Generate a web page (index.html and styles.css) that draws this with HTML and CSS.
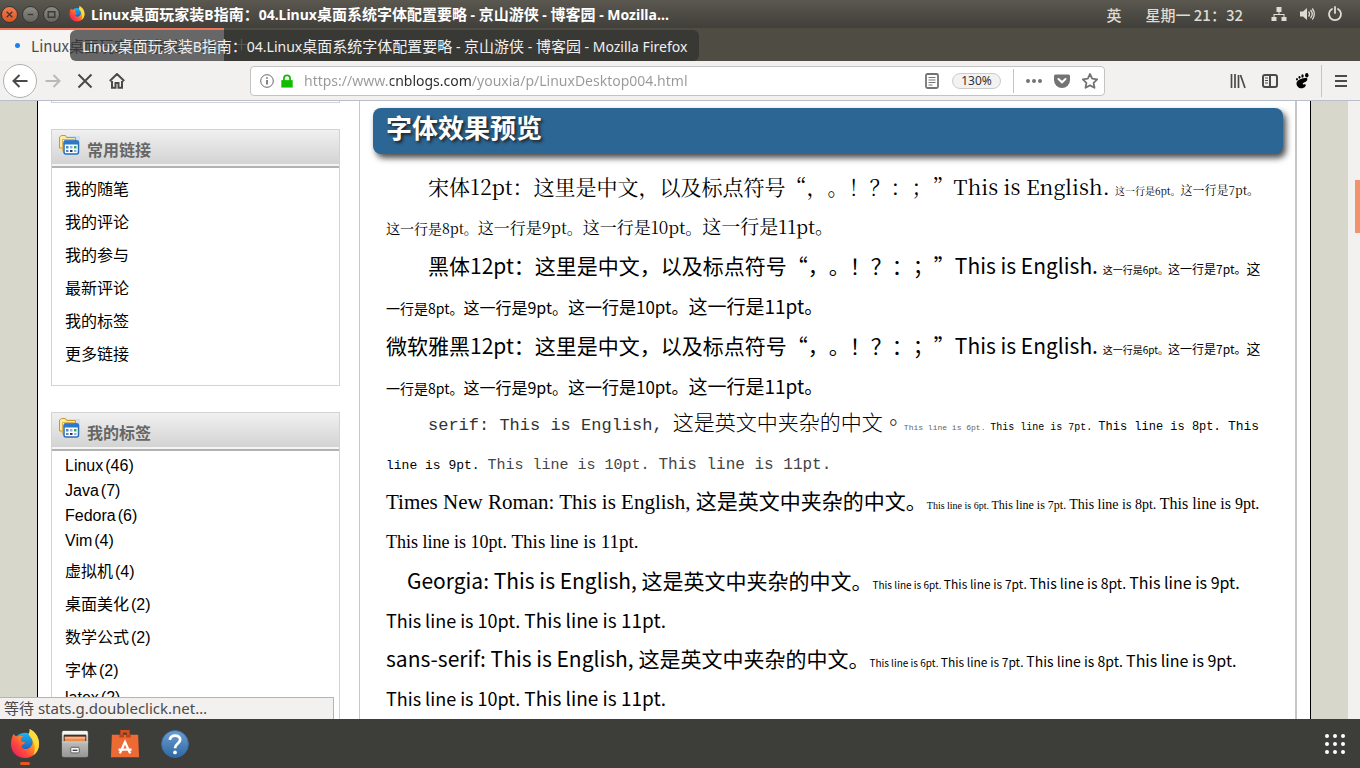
FILE: index.html
```html
<!DOCTYPE html>
<html lang="zh-CN">
<head>
<meta charset="utf-8">
<title>Linux桌面玩家装B指南：04.Linux桌面系统字体配置要略 - 京山游侠 - 博客园</title>
<link rel="stylesheet" href="styles.css">
</head>
<body>
<svg class="defs" width="0" height="0" aria-hidden="true">
  <defs>
    <linearGradient id="fox" x1="1" y1="0" x2="0" y2="1"><stop offset="0" stop-color="#fff44f"/><stop offset=".35" stop-color="#ffa41c"/><stop offset=".65" stop-color="#ff4a3c"/><stop offset="1" stop-color="#e3106e"/></linearGradient>
    <linearGradient id="globe" x1="0" y1="0" x2="0" y2="1"><stop offset="0" stop-color="#1ab5f5"/><stop offset="1" stop-color="#2a3a9c"/></linearGradient>
    <linearGradient id="drawer" x1="0" y1="0" x2="0" y2="1"><stop offset="0" stop-color="#d8d8d6"/><stop offset="1" stop-color="#969694"/></linearGradient>
    <linearGradient id="help" x1="0" y1="0" x2="0" y2="1"><stop offset="0" stop-color="#6d9fd0"/><stop offset="1" stop-color="#2f68a5"/></linearGradient>
  </defs>
  <symbol id="firefox" viewBox="0 0 32 32">
    <circle cx="16" cy="17" r="13" fill="url(#globe)"/>
    <path fill="url(#fox)" d="M4 5c1 2 2 2.500 4 3 2-1 4-1 6 0-2 1-3 3-2 5 1 1 3 1 4 1 0 2-3 2-4 4 1 4 6 4 9 2 4-3 4-8 1-12-1-1-2-2-2-3 1-1 1-3 1-5 6 3 10 9 10 16 0 9-7 15-15 15S1 25 1 16C1 12 2 8 4 5z"/>
    <path fill="#ffe23c" d="M21 0c6 3 10 9 10 16 0 5-2 9-6 12 2-5 2-11-1-16-1-3-4-4-4-7 1-1 1-3 1-5z" opacity=".8"/>
  </symbol>
  <symbol id="links" viewBox="0 0 22 22">
    <path fill="#cfe0f4" d="M3 2h19v19H3z"/>
    <path fill="#fbe9a8" stroke="#c9982c" d="M1.500 14V3l2-1.500h4l1 2h9V14z"/>
    <path fill="#fff6d0" stroke="#d8b254" d="M4.500 17V5.500h12V17z"/>
    <rect x="6" y="7" width="14.500" height="13" rx="2" fill="#fff" stroke="#2b6cb8" stroke-width="1.500"/>
    <path fill="#2b78cc" d="M6 6.500h14.500v4H6z"/>
    <path fill="#4d86c6" d="M8 12h2.500v2.500H8zM8 16h2.500v2H8z"/><path fill="#2fae4a" d="M16 12h2.500v2.500H16z"/><path fill="#8fb3da" d="M12 12h2.500v2.500H12zM16 16h2.500v2H16z"/><path fill="#1d3c6b" d="M12 16h2.500v2H12z"/>
  </symbol>
</svg>

<header class="topbar">
  <div class="winbtns">
    <button class="win close" aria-label="关闭"><svg viewBox="0 0 16 16"><path d="M5 5l6 6M11 5l-6 6"/></svg></button>
    <button class="win" aria-label="最小化"><svg viewBox="0 0 16 16"><path d="M5 8h6"/></svg></button>
    <button class="win" aria-label="最大化"><svg viewBox="0 0 16 16"><path d="M4.500 5h7v6h-7z"/></svg></button>
  </div>
  <svg class="appicon"><use href="#firefox"/></svg>
  <h1 class="wintitle"><span class="la">Linux</span>桌面玩家装<span class="la">B</span>指南：<span class="la">04.Linux</span>桌面系统字体配置要略<span class="la"> - </span>京山游侠<span class="la"> - </span>博客园<span class="la"> - Mozilla…</span></h1>
  <div class="tray">
    <span>英</span>
    <time>星期一 21：32</time>
    <svg class="trayicon" viewBox="0 0 16 16"><path fill="currentColor" d="M5.500 1h5v5h-2v2h5v3h2v4h-5v-4h2V9h-9v2h2v4h-5v-4h2V8h5V6h-2z"/></svg>
    <svg class="trayicon" viewBox="0 0 16 16"><path fill="currentColor" d="M1 5.500h3L8 2v12l-4-3.500H1z"/><path fill="none" stroke="currentColor" stroke-width="1.300" d="M9.500 5.500q2 2.500 0 5M11.500 4q3.500 4 0 8M13.300 2.500q4 5.500 0 11"/></svg>
    <svg class="trayicon" viewBox="0 0 16 16"><path fill="none" stroke="currentColor" stroke-width="1.800" stroke-linecap="round" d="M5 3a6 6 0 1 0 6 0M8 1v6"/></svg>
  </div>
</header>

<div class="tabstrip">
  <div class="tab"><span class="dot"></span><span class="tabtext">Linux桌面玩家装B指南：04.</span></div>
  <button class="newtab" aria-label="新标签页"><svg viewBox="0 0 16 16"><path d="M8 1v14M1 8h14"/></svg></button>
  <div class="tooltip"><span class="la">Linux</span>桌面玩家装<span class="la">B</span>指南：<span class="la">04.Linux</span>桌面系统字体配置要略<span class="la"> - </span>京山游侠<span class="la"> - </span>博客园<span class="la"> - Mozilla Firefox</span></div>
</div>

<nav class="navbar">
  <div class="navleft">
    <button class="back" aria-label="后退"><svg viewBox="0 0 16 16"><path d="M15.500 8H1.500M7.500 2l-6 6 6 6"/></svg></button>
    <button class="nb dim" aria-label="前进"><svg viewBox="0 0 16 16"><path d="M.5 8h14M8.500 2l6 6-6 6"/></svg></button>
    <button class="nb" aria-label="停止"><svg viewBox="0 0 16 16"><path d="M1.500 1.500l13 13M14.500 1.500l-13 13"/></svg></button>
    <button class="nb" aria-label="主页"><svg viewBox="0 0 16 16"><path d="M.8 8L8 1l7.200 7M3 8v6.800h3.500V10h3v4.800H13V8"/></svg></button>
  </div>
  <div class="urlbar">
    <svg class="ico info" viewBox="0 0 14 14"><circle cx="7" cy="7" r="6.300"/><path stroke-width="1.600" d="M7 6v4.500M7 3.200v1.600"/></svg>
    <svg class="ico" viewBox="0 0 16 16"><path fill="#12bc00" d="M1.500 7h13v8.500h-13z"/><path fill="none" stroke="#12bc00" stroke-width="2" d="M4.500 8V5a3.500 3.500 0 0 1 7 0v3"/></svg>
    <input class="url" type="text" aria-label="地址" value="https://www.cnblogs.com/youxia/p/LinuxDesktop004.html">
    <button class="ub" aria-label="阅读模式"><svg viewBox="0 0 16 16"><rect x="2" y="1" width="12" height="14" rx="1.500"/><path stroke-width="1" d="M4.500 4.500h7M4.500 7h7M4.500 9.500h7M4.500 12h4"/></svg></button>
    <button class="zoom">130%</button>
    <span class="sep"></span>
    <button class="ub" aria-label="页面操作"><svg viewBox="0 0 16 16"><path fill="#737373" stroke="none" d="M0 8a2 2 0 1 0 4 0 2 2 0 1 0-4 0M6 8a2 2 0 1 0 4 0 2 2 0 1 0-4 0M12 8a2 2 0 1 0 4 0 2 2 0 1 0-4 0"/></svg></button>
    <button class="ub" aria-label="Pocket"><svg viewBox="0 0 16 16"><path fill="#737373" stroke="none" d="M1.500 1.500h13q1.500 0 1.500 1.500v4a8 8 0 0 1-16 0V3q0-1.500 1.500-1.500z"/><path stroke="#fff" stroke-width="2" stroke-linecap="round" d="M4.500 6L8 9.300 11.500 6"/></svg></button>
    <button class="ub" aria-label="收藏"><svg viewBox="0 0 16 16"><path stroke-linejoin="round" d="M8 1l2.200 4.600 5 .7-3.600 3.500.9 5L8 12.400l-4.500 2.400.9-5L.8 6.300l5-.7z"/></svg></button>
  </div>
  <div class="navright">
    <button class="nb" aria-label="书架"><svg viewBox="0 0 16 16"><path stroke-width="1.700" d="M1.500 1v14M5 1v14M8.500 2v13M10.500 2l4.500 13"/></svg></button>
    <button class="nb" aria-label="侧栏"><svg viewBox="0 0 16 16"><rect x="1" y="2" width="14" height="12" rx="2"/><path d="M8 2v12"/><path stroke-width="1" d="M3 5h3M3 7.500h3M3 10h3"/></svg></button>
    <button class="nb foot" aria-label="GNOME"><svg viewBox="0 0 16 16"><path fill="#000" stroke="none" d="M11 5c3-.5 3 2 1 3.500-2 1.300-4 1.500-3 2.700.8.800 1.500-.5 2.500.3 1 1.200-1 3.800-4 3.800S2.500 13 2.500 10.500 6 5.500 11 5z"/><ellipse cx="12.800" cy="2.300" rx="1.700" ry="2.200" fill="#000" stroke="none"/><ellipse cx="8.500" cy="3" rx="1.200" ry="1.700" fill="#000" stroke="none"/><ellipse cx="5.500" cy="4.300" rx="1" ry="1.400" fill="#000" stroke="none"/><ellipse cx="3" cy="6.200" rx=".9" ry="1.200" fill="#000" stroke="none"/></svg></button>
    <span class="sep"></span>
    <button class="nb" aria-label="菜单"><svg viewBox="0 0 16 16"><path d="M2 3h12M2 8h12M2 13h12"/></svg></button>
  </div>
</nav>

<div class="viewport">
  <div class="page">
    <aside class="side">
      <div class="box prev"></div>
      <section class="box common">
        <h3 class="boxhead"><svg><use href="#links"/></svg>常用链接</h3>
        <ul>
          <li><a href="#">我的随笔</a></li>
          <li><a href="#">我的评论</a></li>
          <li><a href="#">我的参与</a></li>
          <li><a href="#">最新评论</a></li>
          <li><a href="#">我的标签</a></li>
          <li><a href="#">更多链接</a></li>
        </ul>
      </section>
      <section class="box tags">
        <h3 class="boxhead"><svg><use href="#links"/></svg>我的标签</h3>
        <ul>
          <li class="en"><a href="#">Linux</a>(46)</li>
          <li class="en"><a href="#">Java</a>(7)</li>
          <li class="en"><a href="#">Fedora</a>(6)</li>
          <li class="en"><a href="#">Vim</a>(4)</li>
          <li><a href="#">虚拟机</a>(4)</li>
          <li><a href="#">桌面美化</a>(2)</li>
          <li><a href="#">数学公式</a>(2)</li>
          <li><a href="#">字体</a>(2)</li>
          <li class="en"><a href="#">latex</a>(2)</li>
        </ul>
      </section>
    </aside>
    <main class="post">
      <h2>字体效果预览</h2>
      <p class="song in2">宋体12pt：这里是中文，以及标点符号“，。！？：；”This is English. <span class="s6">这一行是6pt。</span><span class="s7">这一行是7pt。</span><span class="s8">这一行是8pt。</span><span class="s9">这一行是9pt。</span><span class="s10">这一行是10pt。</span><span class="s11">这一行是11pt。</span></p>
      <p class="in2">黑体12pt：这里是中文，以及标点符号“，。！？：；”This is English. <span class="s6">这一行是6pt。</span><span class="s7">这一行是7pt。</span><span class="s8">这一行是8pt。</span><span class="s9">这一行是9pt。</span><span class="s10">这一行是10pt。</span><span class="s11">这一行是11pt。</span></p>
      <p>微软雅黑12pt：这里是中文，以及标点符号“，。！？：；”This is English. <span class="s6">这一行是6pt。</span><span class="s7">这一行是7pt。</span><span class="s8">这一行是8pt。</span><span class="s9">这一行是9pt。</span><span class="s10">这一行是10pt。</span><span class="s11">这一行是11pt。</span></p>
      <p class="serif in2"><span class="m12">serif: This is English, </span><span lang="zh-TW" class="tw">这是英文中夹杂的中文。</span><span class="m6">This line is 6pt. </span><span class="m7">This line is 7pt. </span><span class="m8">This line is 8pt. </span><span class="m9">This line is 9pt. </span><span class="m10">This line is 10pt. </span><span class="m11">This line is 11pt.</span></p>
      <p class="latin times">Times New Roman: This is English, 这是英文中夹杂的中文。<span class="s6">This line is 6pt. </span><span class="s7">This line is 7pt. </span><span class="s8">This line is 8pt. </span><span class="s9">This line is 9pt. </span><span class="s10">This line is 10pt. </span><span class="s11">This line is 11pt.</span></p>
      <p class="latin in1">Georgia: This is English, 这是英文中夹杂的中文。<span class="s6">This line is 6pt. </span><span class="s7">This line is 7pt. </span><span class="s8">This line is 8pt. </span><span class="s9">This line is 9pt. </span><span class="s10">This line is 10pt. </span><span class="s11">This line is 11pt.</span></p>
      <p class="latin">sans-serif: This is English, 这是英文中夹杂的中文。<span class="s6">This line is 6pt. </span><span class="s7">This line is 7pt. </span><span class="s8">This line is 8pt. </span><span class="s9">This line is 9pt. </span><span class="s10">This line is 10pt. </span><span class="s11">This line is 11pt.</span></p>
    </main>
  </div>
  <div class="scroll"><div class="thumb"></div></div>
  <div class="status">等待 stats.g.doubleclick.net…</div>
</div>

<footer class="dock">
  <button class="app active" aria-label="Firefox"><svg viewBox="0 0 32 32"><use href="#firefox"/></svg></button>
  <button class="app" aria-label="文件"><svg viewBox="0 0 32 32"><rect x="2" y="2" width="28" height="28" rx="2" fill="url(#drawer)"/><path fill="#f4f4f2" d="M3 2h26v5H3z"/><path fill="#3a3029" d="M4 6h24v7H4z"/><path fill="#f08a4b" d="M5 8h22v5H5z"/><path fill="#fbd9b8" d="M5 9h22v1H5z"/><path fill="#c2c2c0" d="M2 13h28v2H2z"/><rect x="11.500" y="19.500" width="9" height="6" rx="1" fill="#f4f4f2" stroke="#555"/><path fill="#444" d="M13.500 22h5v1.500h-5z"/></svg></button>
  <button class="app" aria-label="软件"><svg viewBox="0 0 32 32"><path fill="#d24f1e" d="M11 1h10v8h-3V4h-4v5h-3z"/><path fill="#ee6a35" d="M2 6h28l1 24H1z"/><path fill="#b8421a" d="M10 6h5v3h-5zM17 6h5v3h-5z"/><path fill="none" stroke="#fff" stroke-width="2.500" d="M10.500 26l5.500-12 5.500 12M9 22h14"/></svg></button>
  <button class="app" aria-label="帮助"><svg viewBox="0 0 32 32"><circle cx="16" cy="16" r="14.300" fill="url(#help)" stroke="#3a6ea8"/><path fill="none" stroke="#fff" stroke-width="3" d="M10.500 11.500c.5-6 11-6 11 0 0 4-5.500 4-5.500 9"/><circle cx="16" cy="25" r="2" fill="#fff"/></svg></button>
  <button class="grid" aria-label="显示应用程序"><svg viewBox="0 0 22 22"><path stroke="#fff" stroke-width="4" stroke-linecap="round" d="M3 3h.01M11 3h.01M19 3h.01M3 11h.01M11 11h.01M19 11h.01M3 19h.01M11 19h.01M19 19h.01"/></svg></button>
</footer>
</body>
</html>
```

FILE: styles.css
```css
* { box-sizing: border-box; }
html, body { height: 100%; }
body {
  margin: 0;
  display: flex;
  flex-direction: column;
  overflow: hidden;
  font-family: "Noto Sans CJK SC", sans-serif;
  font-size: 15px;
  text-spacing-trim: space-all;
  color: #000;
}
button { padding: 0; border: 0; background: none; font: inherit; flex: none; }
h1, h2, h3, p, ul { margin: 0; padding: 0; }
ul { list-style: none; }
svg { display: block; }
.defs { position: absolute; }
.la { font-family: "Noto Sans", sans-serif; font-size: 14px; white-space: pre; }

.topbar {
  flex: none;
  height: 28px;
  display: flex;
  align-items: center;
  background: linear-gradient(#5a584f, #403f3a);
  color: #fff;
}
.winbtns { display: flex; gap: 4px; padding-left: 1px; }
.win {
  width: 17px;
  height: 17px;
  border-radius: 50%;
  background: linear-gradient(#8b8a83, #66655f);
  border: 1px solid #35342f;
}
.win svg { width: 15px; height: 15px; fill: none; stroke: #3b3a36; stroke-width: 1.500; }
.win.close { background: linear-gradient(#f47a4f, #e2531f); }
.appicon { width: 16px; height: 16px; margin: 0 6px 0 9px; flex: none; }
.wintitle { font-size: 15px; font-weight: 700; line-height: 28px; flex: 1; white-space: nowrap; overflow: hidden; }
.tray { display: flex; align-items: center; color: #dfdbd2; font-weight: 500; padding-right: 17px; }
.tray time { margin: 0 28px 0 24px; }
.trayicon { width: 16px; height: 16px; margin-left: 12px; }
.trayicon:first-of-type { margin-left: 0; }

.tabstrip { flex: none; height: 33px; display: flex; background: #4f4c44; position: relative; }
.tab {
  width: 224px;
  height: 33px;
  padding-left: 15px;
  display: flex;
  align-items: center;
  gap: 11px;
  background: #f5f4f2;
  border-top: 2px solid #f0765a;
  color: #4c4c4c;
  overflow: hidden;
  white-space: nowrap;
}
.dot { flex: none; width: 5px; height: 5px; border-radius: 50%; background: #1b80f0; }
.newtab { width: 34px; }
.newtab svg { width: 13px; height: 13px; margin: 0 auto; stroke: #bbb; stroke-width: 1.500; }
.tooltip {
  position: absolute;
  left: 70px;
  top: 2px;
  height: 31px;
  padding: 0 12px;
  line-height: 32px;
  border-radius: 6px;
  background: rgba(47, 48, 47, .72);
  color: #f0f0f0;
  white-space: nowrap;
}

.navbar {
  flex: none;
  height: 40px;
  display: flex;
  align-items: center;
  background: #f3f1f0;
  border-bottom: 1px solid #b9bfc8;
}
.navleft { flex: none; width: 250px; display: flex; align-items: center; padding-left: 3px; }
.back {
  width: 34px;
  height: 34px;
  border: 1px solid #b0b0b0;
  border-radius: 50%;
  background: #fff;
  display: grid;
  place-items: center;
}
.nb { width: 32px; height: 32px; display: grid; place-items: center; }
.nb svg, .back svg, .ub svg { width: 16px; height: 16px; fill: none; stroke: #4a4a4a; stroke-width: 2; }
.nb.dim svg { stroke: #b9b9b9; }
.urlbar {
  flex: 1;
  height: 30px;
  display: flex;
  align-items: center;
  padding: 0 0 0 9px;
  background: #fff;
  border: 1px solid #c3c3c3;
  border-radius: 4px;
}
.ico { width: 14px; height: 14px; margin-right: 6px; flex: none; }
.info { fill: none; stroke: #666; }
.url {
  flex: 1;
  min-width: 0;
  height: 28px;
  padding: 0 0 0 4px;
  border: 0;
  outline: 0;
  font: 14px "Noto Sans", "Noto Sans CJK SC", sans-serif;
  color: transparent;
  background: linear-gradient(90deg, #999 90px, #2a2a2a 90px, #2a2a2a 172px, #999 172px);
  -webkit-background-clip: text;
  background-clip: text;
}
.ub { width: 28px; height: 28px; display: grid; place-items: center; }
.ub svg { stroke: #737373; stroke-width: 1.800; }
.zoom {
  width: 49px;
  height: 16px;
  margin: 0 12px 0 6px;
  border: 1px solid #ccc;
  border-radius: 8px;
  background: #f2f2f2;
  font: 12px/14px "Noto Sans", sans-serif;
  color: #333;
}
.sep { width: 1px; height: 24px; background: #c4c4c4; margin-right: 6px; }
.navright { flex: none; width: 255px; display: flex; align-items: center; justify-content: flex-end; padding-right: 3px; }
.navright .sep { height: 32px; margin: 0 3px; }

.viewport { flex: 1; min-height: 0; display: flex; background: #d8d7cc; position: relative; overflow: hidden; }
.page {
  flex: 1;
  min-width: 0;
  display: flex;
  margin: 0 37px;
  padding-right: 13px;
  background: #fff;
  border: solid #000;
  border-width: 0 1px;
}
.scroll { width: 12px; flex: none; background: #f3f1f0; }
.thumb { width: 5px; height: 53px; margin: 79px 0 0 7px; background: #f3926b; }

.side { flex: none; width: 322px; padding: 0 19px 0 13px; border-right: 1px solid #c9c9c9; font: 16px "Liberation Sans", "Noto Sans CJK SC", sans-serif; }
.box { border: 1px solid #d3d3d3; }
.prev { height: 2px; border-top: 0; margin-bottom: 26px; }
.common { height: 257px; margin-bottom: 26px; }
.tags { height: 400px; }
.boxhead {
  height: 38px;
  display: flex;
  gap: 7px;
  padding: 4px 0 0 6px;
  background: linear-gradient(#f0f0f0, #d3d3d3 34px, #f4f4f4 34px, #f4f4f4 36px, #fff 36px);
  border-bottom: 2px solid #b2b2b2;
  color: #666;
  font-size: 16px;
  line-height: 34px;
}
.boxhead svg { width: 22px; height: 22px; flex: none; }
.box ul { padding: 5px 13px; }
.box li { height: 33px; line-height: 33px; }
.box li.en { height: 25px; line-height: 25px; }
.tags ul { padding-top: 2px; }
.tags li:not(.en) { padding-top: 2px; }
.box a { color: #000; text-decoration: none; margin-right: 2px; }

.post { flex: 1; min-width: 0; padding: 7px 12px 0 13px; border-right: 2px solid #c6c6ca; }
.post h2 {
  height: 46px;
  margin-bottom: 13px;
  padding-left: 13px;
  border-radius: 8px;
  background: #2b6695;
  box-shadow: 3px 4px 6px rgba(0, 0, 0, .7);
  color: #fff;
  font-size: 26px;
  line-height: 38px;
  text-shadow: 2px 2px 3px #222;
}
.post p { padding: 0 12px 0 13px; font-size: 21px; line-height: 40px; }
.post span { line-height: 1; }
.in1 { text-indent: 21px; }
.in2 { text-indent: 42px; }
.post .song { font-family: "Noto Serif CJK SC", "Noto Sans CJK SC", serif; line-height: 39px; }
.post .serif { font-family: "Liberation Mono", "Noto Sans CJK TC", monospace; line-height: 39px; }
.tw { font-family: "Noto Sans CJK TC", sans-serif; font-weight: 300; }
.post .latin { line-height: 39px; }
.post .times { font-family: "Liberation Serif", "Noto Sans CJK SC", serif; }
.s6 { font-size: 10px; }
.s7 { font-size: 12px; }
.s8 { font-size: 14px; }
.s9 { font-size: 16px; }
.s10 { font-size: 17px; }
.latin .s10 { font-size: 18px; }
.s11 { font-size: 19px; }
.m6 { font-size: 8px; color: #666; }
.m7 { font-size: 10px; }
.m8 { font-size: 12px; }
.m9 { font-size: 13px; }
.m10 { font-size: 15px; color: #444; }
.m11 { font-size: 16px; color: #444; }
.m12 { font-size: 17px; color: #333; }

.status {
  position: absolute;
  left: 0;
  bottom: 0;
  width: 334px;
  height: 22px;
  padding-left: 4px;
  border: solid #b4b4b4;
  border-width: 1px 1px 0 0;
  background: #f3f1f0;
  color: #4a4a4a;
  font: 15px/21px "Noto Sans", "Noto Sans CJK SC", sans-serif;
}

.dock { flex: none; height: 49px; display: flex; align-items: center; background: #3d3e39; padding: 0 14px 0 0; }
.app { width: 50px; height: 49px; display: grid; place-items: center; position: relative; }
.app svg { width: 30px; height: 30px; }
.active::after { content: ""; position: absolute; left: 20px; bottom: 3px; width: 10px; height: 3px; border-radius: 2px; background: #e95420; }
.grid { margin-left: auto; padding: 0; }
.grid svg { width: 22px; height: 22px; }
```
